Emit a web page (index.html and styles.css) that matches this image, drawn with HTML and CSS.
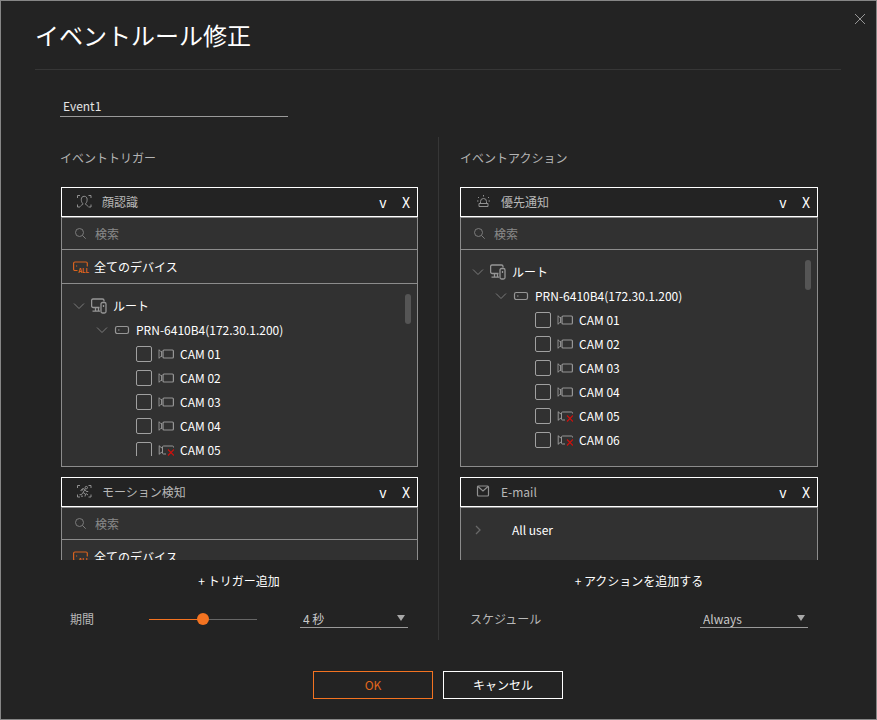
FILE: index.html
```html
<!DOCTYPE html>
<html lang="ja">
<head>
<meta charset="utf-8">
<title>イベントルール修正</title>
<link rel="stylesheet" href="styles.css">
</head>
<body>
<svg class="defs" aria-hidden="true">
  <symbol id="down" viewBox="0 0 14 16"><path d="M2 5.500l5 5 5-5" stroke="#7c7c7c"/></symbol>
  <symbol id="right" viewBox="0 0 14 16"><path d="M5 4l4 4-4 4" stroke="#686868" stroke-width="1.3"/></symbol>
  <symbol id="search" viewBox="0 0 12 12"><circle cx="4.500" cy="4.500" r="4"/><path d="M7.500 7.500l3.200 3.200"/></symbol>
  <symbol id="root" viewBox="0 0 16 16" stroke-width="1.300"><path d="M8.500 9.500H2A1.500 1.500 0 0 1 .6 8V2.500A1.500 1.500 0 0 1 2 1h9.500A1.500 1.500 0 0 1 13 2.500V3.500M4.500 9.500v3M7.500 9.500v3M1.500 13.200H9"/><rect x="10" y="4.500" width="5" height="10.500" rx="1.500"/><path d="M12.500 7v2"/></symbol>
  <symbol id="device" viewBox="0 0 16 16" stroke-width="1.200"><rect x="1.500" y="4.500" width="13" height="7" rx="1.700"/><path d="M4 8h1.500"/></symbol>
  <symbol id="cam" viewBox="0 0 16 16" stroke-width="1.200"><rect x="5" y="4" width="10.400" height="8" rx="1"/><path d="M1 3.500v9M3.500 5v6" stroke-width=".9"/><path d="M1 4l2.500 2M1 12l2.500-2" stroke-width=".8"/></symbol>
  <symbol id="camoff" viewBox="0 0 16 16"><path d="M15.500 5.500V5a1 1 0 0 0-1-1H5.500a1 1 0 0 0-1 1v6a1 1 0 0 0 1 1H8M1.200 3.500v9M1.200 4l2.800 2M1.200 12l2.800-2"/><path d="M10 7.500l6 6M16 7.500l-6 6" stroke="#d0100c" stroke-width="1.200"/></symbol>
  <symbol id="face" viewBox="0 0 16 14"><path d="M1.500 3V.5H4M12.500.5H15V3M15 9.500V12h-2.500M4 12H1.500V9.500"/><path d="M4.500 11.500c.4-1.400 1.100-1.300 2.200-2V8.300C5.600 7.500 5.300 6 5.300 4.300 5.300 2.500 6.400 1.300 8.200 1.300s2.900 1.200 2.900 3c0 1.700-.3 3.200-1.400 4v1.200c1.100.7 1.800.6 2.200 2"/></symbol>
  <symbol id="motion" viewBox="0 0 16 14"><path d="M1.500 3V.5H4M12.500.5H15V3M15 9.500V12h-2.500M4 12H1.500V9.500"/><circle cx="10.300" cy="2.600" r="1.200"/><path d="M4.500 5.500L7 3.500l2 1-2 3 2.500 1.500-.5 2.500M9 4.500l1.300 2h1.900M7 7.500l-1.500 2.200H3.500M5.500 6.200L7 4M10 8.500l2 1.500M5 11.200h2"/></symbol>
  <symbol id="siren" viewBox="0 0 16 14"><path d="M5.500 8.500V6.500a3 3 0 0 1 6 0v2M4 8.500h9v3H4zM8.500 1.500V0M4 3L3 2M13 3l1-1M3.500 6H2M13.500 6H15"/></symbol>
  <symbol id="mail" viewBox="0 0 16 14" stroke-width="1.200"><rect x="2.500" y="1" width="11" height="10" rx="1"/><path d="M3 1.500l5 4.500 5-4.500"/></symbol>
  <symbol id="all" viewBox="0 0 16 14"><path d="M4.500 10.500H2A1.300 1.300 0 0 1 .6 9.200V3.300A1.300 1.300 0 0 1 2 2h11a1.300 1.300 0 0 1 1.300 1.300V6.500" stroke-width="1.200"/><path d="M3 6h1.200"/></symbol>
</svg>
<main class="dialog">
  <button class="close" type="button" aria-label="閉じる"><svg viewBox="0 0 12 12"><path d="M1 1l10 10M11 1L1 11"/></svg></button>
  <header class="header"><h1>イベントルール修正</h1></header>
  <input class="name" type="text" value="Event1" aria-label="ルール名">

  <div class="columns">
    <section class="column">
      <h2>イベントトリガー</h2>
      <div class="list inset">
        <article class="panel">
          <header class="head"><svg><use href="#face"/></svg><h3>顔認識</h3><button type="button">v</button><button type="button">X</button></header>
          <div class="body">
            <label class="search"><svg><use href="#search"/></svg><input type="text" placeholder="検索" aria-label="検索"></label>
            <div class="every"><span class="allicon"><svg><use href="#all"/></svg><b>ALL</b></span>全てのデバイス</div>
            <div class="tree">
              <span class="thumb"></span>
              <div class="row"><svg class="chev"><use href="#down"/></svg><svg><use href="#root"/></svg>ルート</div>
              <div class="row sub"><svg class="chev"><use href="#down"/></svg><svg><use href="#device"/></svg>PRN-6410B4(172.30.1.200)</div>
              <label class="row leaf"><input type="checkbox"><svg><use href="#cam"/></svg>CAM 01</label>
              <label class="row leaf"><input type="checkbox"><svg><use href="#cam"/></svg>CAM 02</label>
              <label class="row leaf"><input type="checkbox"><svg><use href="#cam"/></svg>CAM 03</label>
              <label class="row leaf"><input type="checkbox"><svg><use href="#cam"/></svg>CAM 04</label>
              <label class="row leaf"><input type="checkbox"><svg><use href="#camoff"/></svg>CAM 05</label>
            </div>
          </div>
        </article>
        <article class="panel">
          <header class="head"><svg><use href="#motion"/></svg><h3>モーション検知</h3><button type="button">v</button><button type="button">X</button></header>
          <div class="body">
            <label class="search"><svg><use href="#search"/></svg><input type="text" placeholder="検索" aria-label="検索"></label>
            <div class="every"><span class="allicon"><svg><use href="#all"/></svg><b>ALL</b></span>全てのデバイス</div>
          </div>
        </article>
      </div>
      <button class="add" type="button">+ トリガー追加</button>
      <div class="option">
        <label for="period">期間</label>
        <input id="period" type="range" min="0" max="8" value="4">
        <span class="pick"><select aria-label="期間の秒数"><option>4 秒</option></select></span>
      </div>
    </section>

    <div class="divider"></div>

    <section class="column">
      <h2>イベントアクション</h2>
      <div class="list">
        <article class="panel">
          <header class="head"><svg><use href="#siren"/></svg><h3>優先通知</h3><button type="button">v</button><button type="button">X</button></header>
          <div class="body">
            <label class="search"><svg><use href="#search"/></svg><input type="text" placeholder="検索" aria-label="検索"></label>
            <div class="tree">
              <span class="thumb"></span>
              <div class="row"><svg class="chev"><use href="#down"/></svg><svg><use href="#root"/></svg>ルート</div>
              <div class="row sub"><svg class="chev"><use href="#down"/></svg><svg><use href="#device"/></svg>PRN-6410B4(172.30.1.200)</div>
              <label class="row leaf"><input type="checkbox"><svg><use href="#cam"/></svg>CAM 01</label>
              <label class="row leaf"><input type="checkbox"><svg><use href="#cam"/></svg>CAM 02</label>
              <label class="row leaf"><input type="checkbox"><svg><use href="#cam"/></svg>CAM 03</label>
              <label class="row leaf"><input type="checkbox"><svg><use href="#cam"/></svg>CAM 04</label>
              <label class="row leaf"><input type="checkbox"><svg><use href="#camoff"/></svg>CAM 05</label>
              <label class="row leaf"><input type="checkbox"><svg><use href="#camoff"/></svg>CAM 06</label>
            </div>
          </div>
        </article>
        <article class="panel">
          <header class="head"><svg><use href="#mail"/></svg><h3>E-mail</h3><button type="button">v</button><button type="button">X</button></header>
          <div class="body">
            <div class="tree"><div class="row"><svg class="chev"><use href="#right"/></svg><svg></svg>All user</div></div>
          </div>
        </article>
      </div>
      <button class="add" type="button">+ アクションを追加する</button>
      <div class="option">
        <label for="schedule">スケジュール</label>
        <span class="pick"><select id="schedule"><option>Always</option></select></span>
      </div>
    </section>
  </div>

  <footer class="actions">
    <button class="ok" type="button">OK</button>
    <button type="button">キャンセル</button>
  </footer>
</main>
</body>
</html>
```
FILE: styles.css
```css
* { box-sizing: border-box; }
body { margin: 0; background: #232323; color: #fff; }
body, button, input, select { font-family: "Noto Sans CJK JP", sans-serif; font-size: 12px; line-height: 18px; }
button, input, select { appearance: none; margin: 0; padding: 0; border: 0; border-radius: 0; background: none; color: inherit; }
h1, h2, h3 { margin: 0; font-weight: 400; }
svg { fill: none; stroke: #969696; flex: none; width: 16px; height: 16px; }
.defs { position: absolute; width: 0; height: 0; }

.dialog {
  position: relative;
  display: flex;
  flex-direction: column;
  height: 100vh;
  min-height: 560px;
  border: 1px solid #868686;
  padding: 0 35px 20px 34px;
}
.close { position: absolute; top: 12px; right: 10px; width: 12px; height: 12px; }
.close svg { display: block; width: 12px; height: 12px; }
.header { height: 69px; border-bottom: 1px solid #363636; padding-top: 15px; flex: none; }
h1 { font-size: 24px; line-height: 38px; }

.name {
  flex: none;
  width: 228px;
  height: 22px;
  margin: 25px 0 20px 25px;
  padding: 0 3px;
  border-bottom: 1px solid #9a9a9a;
  color: #e4e4e4;
}

.columns {
  display: grid;
  grid-template: minmax(0, 1fr) / 1fr 2px 1fr;
  column-gap: 20px;
  flex: 1;
  min-height: 0;
  margin: 0 23px 0 25px;
}
.divider { border-left: 1px solid #363636; }
.column { display: flex; flex-direction: column; min-width: 0; min-height: 0; }
h2 { color: #b4b4b4; font-size: 12px; line-height: 18px; margin: 12px 0 20px; }
.list { flex: 1; min-height: 0; overflow: hidden; }
.inset { padding-left: 1px; }

.panel { margin-bottom: 10px; }
.head { display: flex; align-items: center; height: 30px; border: 1px solid #fff; padding-left: 14px; }
.head svg { height: 14px; stroke: #909090; margin-right: 10px; }
.head h3 { flex: 1; font-size: 12px; color: #b8b8b8; }
.head button { width: 24px; font-size: 14px; line-height: 20px; }
.head button:last-child { width: 22px; }
.body { display: flex; flex-direction: column; height: 250px; border: 1px solid #8c8c8c; background: #313131; }
.search { display: flex; align-items: center; flex: none; height: 32px; border-bottom: 1px solid #8c8c8c; padding-left: 13px; gap: 8px; }
.search svg { width: 12px; height: 12px; stroke: #7c7c7c; }
.search input { flex: 1; min-width: 0; }
.search input::placeholder { color: #8a8a8a; opacity: 1; }
.every { display: flex; align-items: center; flex: none; height: 34px; border-bottom: 1px solid #8c8c8c; padding-left: 11px; gap: 5px; }
.allicon { position: relative; width: 16px; height: 14px; }
.allicon svg { display: block; height: 14px; stroke: #d8621e; }
.allicon b { position: absolute; right: 0; bottom: 0; font-size: 6px; line-height: 6px; color: #e8681c; }

.tree { position: relative; flex: 1; min-height: 0; margin: 10px 6px 10px 10px; overflow: hidden; }
.row { display: flex; align-items: center; height: 24px; gap: 6px; }
.row .chev { width: 14px; margin-right: -1px; }
.sub { padding-left: 23px; }
.leaf { padding-left: 64px; }
.leaf input { width: 16px; height: 16px; border: 1px solid #a0a0a0; border-radius: 2px; }
.thumb { position: absolute; top: 0; right: 0; width: 6px; height: 30px; border-radius: 3px; background: #555; }

.add { align-self: center; height: 20px; margin: 11px 0 0; line-height: 20px; }
.option { display: flex; align-items: center; height: 20px; margin: 18px 10px 11px; color: #b8b8b8; }
.option label { width: 79px; }
.option input { width: 108px; height: 12px; }
.option input::-webkit-slider-runnable-track { height: 1px; background: linear-gradient(90deg, #f37321 50%, #666 50%); }
.option input::-webkit-slider-thumb { appearance: none; width: 12px; height: 12px; margin-top: -6px; border-radius: 50%; background: #f37321; }
.pick { position: relative; width: 108px; margin-left: auto; }
.pick select { display: block; width: 100%; height: 18px; padding-left: 3px; border-bottom: 1px solid #9a9a9a; color: #c8c8c8; }
.pick::after { content: ""; position: absolute; right: 3px; top: 5px; border: solid transparent; border-width: 6px 4px 0; border-top-color: #a8a8a8; pointer-events: none; }

.actions { display: flex; justify-content: center; gap: 10px; flex: none; margin-top: 31px; }
.actions button { width: 120px; height: 28px; border: 1px solid #fff; }
.actions .ok { border-color: #f37321; color: #e0661c; }
```
